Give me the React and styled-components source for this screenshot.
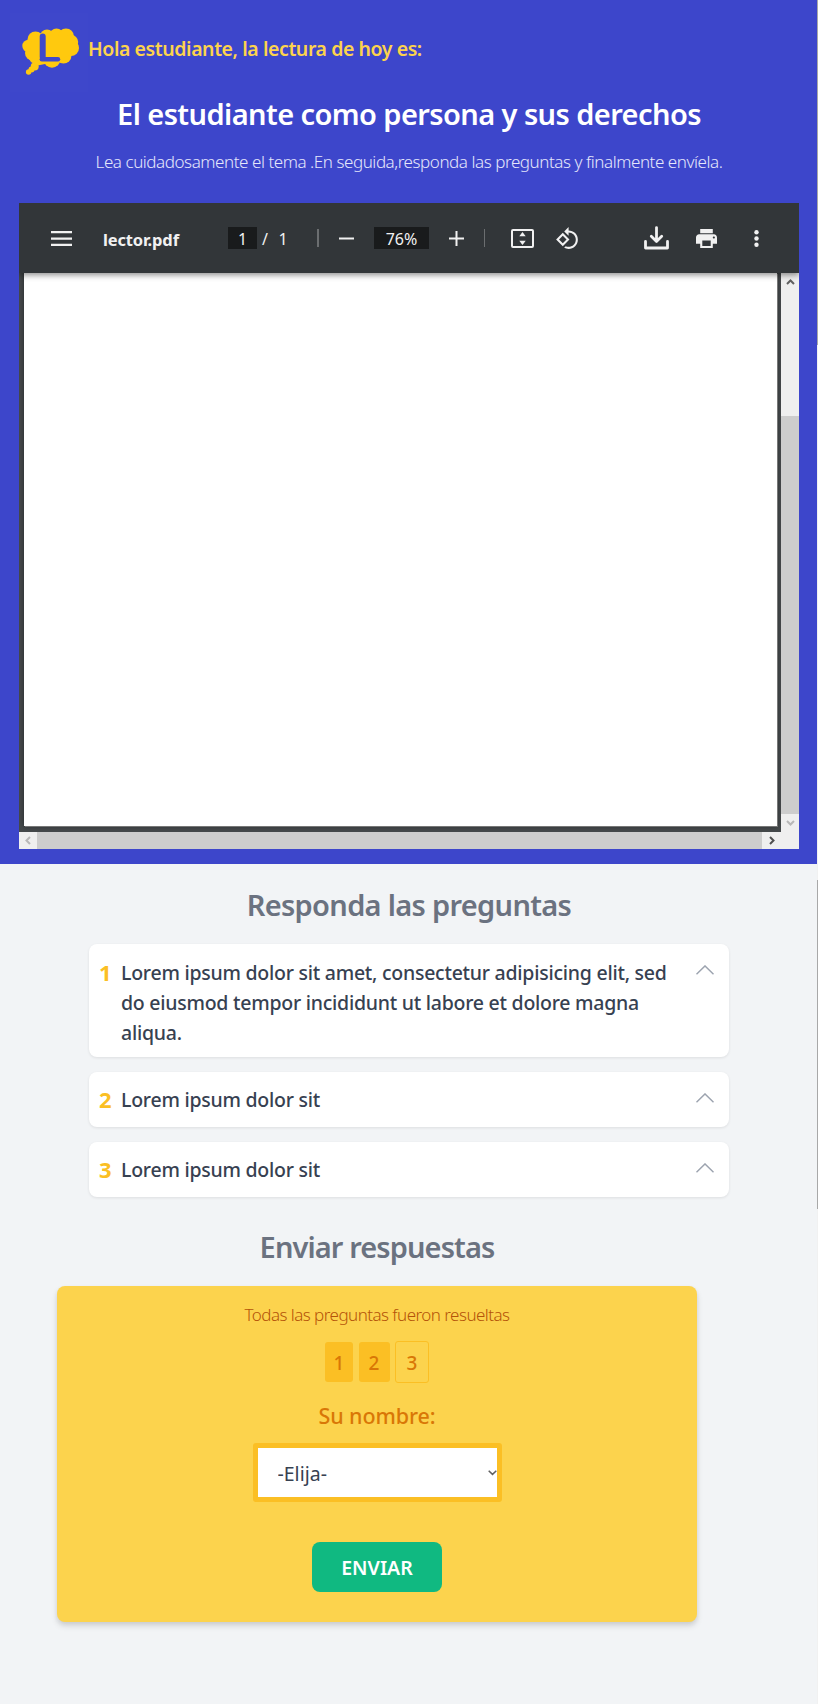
import React from 'react';
import styled, { createGlobalStyle } from 'styled-components';

const GlobalStyle = createGlobalStyle`
  *, *::before, *::after { box-sizing: border-box; }
  body {
    margin: 0;
    background: #f2f4f6;
    font-family: 'Noto Sans', 'Open Sans', sans-serif;
  }
  h1, h2, h3, p { margin: 0; }
`;

const Page = styled.div`
  position: relative;
  min-height: 1704px;
  background: #f2f4f6;
`;

const EdgeTrack = styled.div`
  position: absolute;
  top: 0;
  right: 0;
  display: flex;
  flex-direction: column;
  gap: 535px;
  width: 1px;
  height: 1704px;
  background: #f1f1f1;
`;

const EdgeThumb = styled.div`
  flex: none;
  height: ${(p) => p.$height}px;
  background: #a8a8a8;
`;

const Reading = styled.header`
  padding: 0 19px 15px;
  background: #3d46cb;
`;

const Greeting = styled.div`
  display: flex;
  align-items: center;
  height: 97px;
  margin-left: -9px;
  color: #fcd34d;
  font-size: 19.5px;
  font-weight: 600;
  letter-spacing: -0.43px;
  white-space: nowrap;
`;

const LogoBox = styled.div`
  width: 78px;
  height: 79px;
  margin-top: 8px;
  background: #3e47cb;
  svg { display: block; }
`;

const Title = styled.h1`
  color: #fff;
  font-size: 29px;
  font-weight: 600;
  line-height: 34px;
  letter-spacing: -0.58px;
  text-align: center;
  white-space: nowrap;
`;

const Instructions = styled.p`
  margin-top: 17px;
  color: #e5e7fb;
  font-size: 17px;
  font-weight: 300;
  line-height: 28px;
  letter-spacing: -0.44px;
  text-align: center;
  white-space: nowrap;
`;

const Viewer = styled.section`
  height: 646px;
  margin-top: 27px;
  display: flex;
  flex-direction: column;
  overflow: hidden;
`;

const Toolbar = styled.div`
  position: relative;
  z-index: 1;
  display: flex;
  align-items: center;
  flex: none;
  height: 70px;
  padding-left: 32px;
  background: #323639;
  color: #f1f1f1;
  font-size: 16px;
  box-shadow: 0 2px 6px rgba(0, 0, 0, 0.45);
  svg { display: block; flex: none; fill: #f1f1f1; }
`;

const Tool = styled.div`
  flex: none;
  display: flex;
  align-items: center;
  justify-content: center;
  width: ${(p) => p.$width}px;
  margin-left: ${(p) => p.$gap || 0}px;
  white-space: nowrap;
`;

const TotalPages = styled(Tool)`
  padding-top: 2px;
`;

const FileName = styled(Tool)`
  justify-content: flex-start;
  padding-top: 3px;
  font-size: 16.5px;
  font-weight: 700;
  letter-spacing: -0.15px;
`;

const Field = styled(Tool)`
  height: 22px;
  padding-top: 1px;
  background: #191b1c;
  line-height: 22px;
`;

const Divider = styled(Tool)`
  height: 18px;
  background: #6b6e70;
`;

const Body = styled.div`
  display: flex;
  flex: 1;
  min-height: 0;
`;

const Canvas = styled.div`
  display: flex;
  flex-direction: column;
  flex: 1;
`;

const SheetArea = styled.div`
  flex: 1;
  padding: 0 4px 6px 5px;
  background: #45494b;
`;

const Sheet = styled.div`
  height: 100%;
  background: #fff;
  box-shadow: 1px 1px 0 #777, 0 0 5px #24282a;
`;

const ScrollColumn = styled.div`
  display: flex;
  flex-direction: column;
  width: 18px;
  background: #efefef;
`;

const ScrollRow = styled.div`
  display: flex;
  height: 17px;
  background: #efefef;
`;

const ScrollEnd = styled.div`
  display: flex;
  align-items: center;
  justify-content: center;
  flex: none;
  width: ${(p) => p.$width || 18}px;
  height: ${(p) => p.$height || 17}px;
`;

const ColumnThumb = styled.div`
  height: 398px;
  margin-top: 124px;
  background: #cdcdcd;
`;

const RowThumb = styled.div`
  flex: 1;
  background: #cdcdcd;
`;

const Heading = styled.h2`
  color: #6b7280;
  font-size: 29px;
  font-weight: 600;
  line-height: 36px;
  letter-spacing: ${(p) => p.$tracking}px;
  text-align: center;
`;

const Questions = styled.section`
  padding-top: 23px;
`;

const QuestionList = styled.div`
  display: flex;
  flex-direction: column;
  gap: 15px;
  width: 640px;
  margin: 21px auto 0;
`;

const Question = styled.article`
  display: flex;
  align-items: flex-start;
  height: ${(p) => (p.$long ? 113 : 55)}px;
  padding: ${(p) => (p.$long ? 14 : 13)}px 15px 0 10px;
  border-radius: 8px;
  background: #fff;
  box-shadow: 0 1px 3px rgba(0, 0, 0, 0.09);
`;

const QuestionNumber = styled.span`
  width: 22px;
  margin-top: -1px;
  color: #fbbf24;
  font-size: 22px;
  font-weight: 700;
  line-height: 30px;
`;

const QuestionText = styled.h3`
  width: 560px;
  color: #374151;
  font-size: 19.5px;
  font-weight: 500;
  line-height: 30px;
  letter-spacing: -0.25px;
`;

const Toggle = styled.svg`
  width: 18px;
  height: 10px;
  margin: ${(p) => (p.$long ? 7 : 8)}px 0 0 auto;
  fill: none;
  stroke: #9ca3af;
  stroke-width: 1.4;
`;

const Submit = styled.section`
  width: 640px;
  margin: 32px 0 0 57px;
`;

const Panel = styled.form`
  display: flex;
  flex-direction: column;
  align-items: center;
  height: 336px;
  margin-top: 21px;
  padding-top: 15px;
  border-radius: 8px;
  background: #fcd34d;
  box-shadow: 0 4px 6px rgba(0, 0, 0, 0.12), 0 2px 4px rgba(0, 0, 0, 0.06);
`;

const Status = styled.p`
  color: #b45309;
  font-size: 17px;
  font-weight: 300;
  line-height: 28px;
  letter-spacing: -0.54px;
`;

const Badges = styled.div`
  display: flex;
  align-items: center;
  gap: 5.5px;
  height: 42px;
  margin-top: 12px;
`;

const Badge = styled.span`
  display: flex;
  align-items: center;
  justify-content: center;
  width: ${(p) => p.$width}px;
  height: ${(p) => (p.$pending ? 42 : 40)}px;
  padding-top: 2px;
  border: ${(p) => (p.$pending ? '1px solid #fbbf24' : 'none')};
  border-radius: 3px;
  background: ${(p) => (p.$pending ? 'transparent' : '#fbbf24')};
  color: #d97706;
  font-size: 19px;
  font-weight: 500;
`;

const NameLabel = styled.label`
  margin-top: 18px;
  color: #d97706;
  font-size: 21.5px;
  font-weight: 500;
  line-height: 30px;
  letter-spacing: -0.1px;
`;

const SelectFrame = styled.div`
  display: flex;
  align-items: center;
  width: 249px;
  height: 59px;
  margin-top: 12px;
  border: 5px solid #fbbf24;
  border-radius: 3px;
  background: #fff;
`;

const Select = styled.select`
  flex: 1;
  height: 49px;
  padding: 2px 0 0 20px;
  border: 0;
  outline: 0;
  appearance: none;
  background: transparent;
  color: #374151;
  font: 400 19.5px 'Noto Sans', 'Open Sans', sans-serif;
`;

const SendButton = styled.button`
  width: 130px;
  height: 50px;
  margin-top: 40px;
  padding: 0;
  border: 0;
  border-radius: 8px;
  background: #10b981;
  color: #fff;
  font: 600 19.5px 'Noto Sans', 'Open Sans', sans-serif;
`;

const lobes = [
  [35.5, 39.5, 8], [47, 36.5, 7], [56.5, 35.5, 7], [66, 36.5, 8], [71, 42, 7.2],
  [71, 48, 8], [63.5, 55.5, 8], [52, 59.5, 8.3], [37, 56, 8.5], [28.5, 46, 6.2],
  [32.5, 53, 7.5], [34.7, 66.5, 4], [31.5, 69.5, 3], [28.6, 72, 2.7],
];

const Logo = () => (
  <svg width="79" height="79" viewBox="10 13 79 79">
    <g fill="#ffc90e">
      {lobes.map(([x, y, r]) => <circle key={`${x}-${y}`} cx={x} cy={y} r={r} />)}
      <path d="M32 36H70V55L55 62L35 66L30 50Z" />
    </g>
    <path d="M42.7 36.5V57" stroke="#3f48cc" strokeWidth="6" strokeLinecap="round" />
    <path d="M41.8 59.2H58" stroke="#3f48cc" strokeWidth="4.4" strokeLinecap="round" />
  </svg>
);

const arrows = {
  up: 'M1 6L4.5 2.5L8 6',
  down: 'M1 3L4.5 6.5L8 3',
  left: 'M6 1L2.5 4.5L6 8',
  right: 'M3 1L6.5 4.5L3 8',
};

const ScrollArrow = ({ dir, color, width, height }) => (
  <ScrollEnd $width={width} $height={height}>
    <svg width="9" height="9" viewBox="0 0 9 9" fill="none" stroke={color} strokeWidth="2">
      <path d={arrows[dir]} />
    </svg>
  </ScrollEnd>
);

const PdfToolbar = () => (
  <Toolbar>
    <Tool $width={21}>
      <svg width="21" height="15"><path d="M0 0H21V2.3H0ZM0 6.4H21V8.7H0ZM0 12.7H21V15H0Z" /></svg>
    </Tool>
    <FileName $width={77} $gap={31}>lector.pdf</FileName>
    <Field $width={29} $gap={48}>1</Field>
    <TotalPages $width={8} $gap={4}>/</TotalPages>
    <TotalPages $width={10} $gap={9}>1</TotalPages>
    <Divider $width={2} $gap={29} />
    <Tool $width={15} $gap={20}>
      <svg width="15" height="3"><path d="M0 .5H15V2.5H0Z" /></svg>
    </Tool>
    <Field $width={55} $gap={20}>76%</Field>
    <Tool $width={15} $gap={20}>
      <svg width="15" height="15"><path d="M6.5 0H8.5V6.5H15V8.5H8.5V15H6.5V8.5H0V6.5H6.5Z" /></svg>
    </Tool>
    <Divider $width={1} $gap={20} />
    <Tool $width={23} $gap={26}>
      <svg width="23" height="19" viewBox="0 0 23 19">
        <path fillRule="evenodd" d="M2 0H21Q23 0 23 2V17Q23 19 21 19H2Q0 19 0 17V2Q0 0 2 0ZM2 2V17H21V2ZM11.5 3L14.7 7.3H8.3ZM11.5 16L14.7 11.7H8.3Z" />
      </svg>
    </Tool>
    <Tool $width={22} $gap={22}>
      <svg width="22" height="22" viewBox="0.8 0.7 21.3 21.4">
        <path d="M7.34 6.41L.86 12.9l6.49 6.48 6.49-6.48-6.5-6.49zM3.69 12.9l3.66-3.66L11 12.9l-3.66 3.66-3.65-3.66zm15.67-6.26C17.61 4.88 15.3 4 13 4V.76L8.76 5 13 9.24V6c1.79 0 3.58.68 4.95 2.05 2.73 2.73 2.73 7.17 0 9.9C16.58 19.32 14.79 20 13 20c-.97 0-1.94-.21-2.84-.61l-1.49 1.49C10.02 21.62 11.51 22 13 22c2.3 0 4.61-.88 6.36-2.64 3.52-3.51 3.52-9.21 0-12.72z" />
      </svg>
    </Tool>
    <Tool $width={25} $gap={66}>
      <svg width="25" height="24" viewBox="0 0 25 24">
        <g fill="none" stroke="#f1f1f1" strokeWidth="2.8" strokeLinecap="round" strokeLinejoin="round">
          <path d="M12.5 1.6V15M7.3 10.3L12.5 15.4L17.7 10.3" />
          <path d="M1.5 15.5V22H23.5V15.5" />
        </g>
      </svg>
    </Tool>
    <Tool $width={21} $gap={27}>
      <svg width="21" height="19" viewBox="2 3 20 18" preserveAspectRatio="none">
        <path d="M19 8H5c-1.66 0-3 1.34-3 3v6h4v4h12v-4h4v-6c0-1.66-1.34-3-3-3zm-3 11H8v-5h8v5zm3-7c-.55 0-1-.45-1-1s.45-1 1-1 1 .45 1 1-.45 1-1 1zm-1-9H6v4h12V3z" />
      </svg>
    </Tool>
    <Tool $width={5} $gap={37}>
      <svg width="5" height="17">
        <circle cx="2.5" cy="2.3" r="2.2" />
        <circle cx="2.5" cy="8.5" r="2.2" />
        <circle cx="2.5" cy="14.7" r="2.2" />
      </svg>
    </Tool>
  </Toolbar>
);

const questions = [
  'Lorem ipsum dolor sit amet, consectetur adipisicing elit, sed do eiusmod tempor incididunt ut labore et dolore magna aliqua.',
  'Lorem ipsum dolor sit',
  'Lorem ipsum dolor sit',
];

export default function App() {
  return (
    <Page>
      <GlobalStyle />
      <Reading>
        <Greeting>
          <LogoBox><Logo /></LogoBox>
          Hola estudiante, la lectura de hoy es:
        </Greeting>
        <Title>El estudiante como persona y sus derechos</Title>
        <Instructions>
          Lea cuidadosamente el tema .En seguida,responda las preguntas y finalmente envíela.
        </Instructions>
        <Viewer>
          <PdfToolbar />
          <Body>
            <Canvas>
              <SheetArea><Sheet /></SheetArea>
              <ScrollRow>
                <ScrollArrow dir="left" color="#b8b8b8" />
                <RowThumb />
                <ScrollArrow dir="right" color="#505050" width={19} />
              </ScrollRow>
            </Canvas>
            <ScrollColumn>
              <ScrollArrow dir="up" color="#606060" height={19} />
              <ColumnThumb />
              <ScrollArrow dir="down" color="#b8b8b8" />
            </ScrollColumn>
          </Body>
        </Viewer>
      </Reading>

      <Questions>
        <Heading $tracking={-0.68}>Responda las preguntas</Heading>
        <QuestionList>
          {questions.map((text, i) => {
            const long = text.length > 60;
            return (
              <Question key={i} $long={long}>
                <QuestionNumber>{i + 1}</QuestionNumber>
                <QuestionText>{text}</QuestionText>
                <Toggle $long={long} viewBox="0 0 18 10"><path d="M.5 9.3L9 .9L17.5 9.3" /></Toggle>
              </Question>
            );
          })}
        </QuestionList>
      </Questions>

      <Submit>
        <Heading $tracking={-0.9}>Enviar respuestas</Heading>
        <Panel>
          <Status>Todas las preguntas fueron resueltas</Status>
          <Badges>
            <Badge $width={28}>1</Badge>
            <Badge $width={31}>2</Badge>
            <Badge $width={34} $pending>3</Badge>
          </Badges>
          <NameLabel htmlFor="nombre">Su nombre:</NameLabel>
          <SelectFrame>
            <Select id="nombre"><option>-Elija-</option></Select>
            <svg width="9" height="6" viewBox="0 0 9 6" fill="none" stroke="#606060" strokeWidth="1.5">
              <path d="M.7 .8L4.5 4.4L8.3 .8" />
            </svg>
          </SelectFrame>
          <SendButton type="button">ENVIAR</SendButton>
        </Panel>
      </Submit>

      <EdgeTrack>
        <EdgeThumb $height={345} />
        <EdgeThumb $height={329} />
      </EdgeTrack>
    </Page>
  );
}
